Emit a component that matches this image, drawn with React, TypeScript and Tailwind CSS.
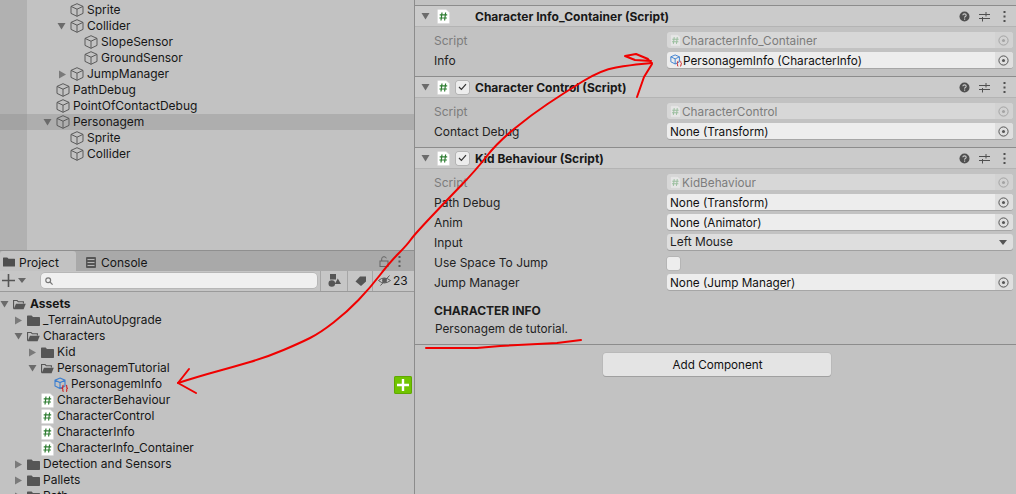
import React from "react";

const Cube = () => (
  <svg width="14" height="14" viewBox="0 0 14 14" fill="none" stroke="#5a5a5a" strokeWidth="1" className="shrink-0">
    <path d="M7 .7 13 3.4V10.4L7 13.3 1 10.4V3.4ZM1 3.4 7 6.2 13 3.4M7 6.2V13.3" />
  </svg>
);

const ArrowDown = () => (
  <svg width="9" height="8" viewBox="0 0 9 8" className="shrink-0"><path d="M0.5 1H8.5L4.5 7.5Z" fill="#6b6b6b" /></svg>
);
const ArrowRight = () => (
  <svg width="9" height="9" viewBox="0 0 9 9" className="shrink-0"><path d="M1 .5V8.5L8 4.5Z" fill="#7a7a7a" /></svg>
);

const FolderClosed = () => (
  <svg width="13" height="11" viewBox="0 0 13 11" className="shrink-0"><path d="M0 1.2Q0 .5.7.5H4.6L6 2H12.3Q13 2 13 2.7V10.3Q13 11 12.3 11H.7Q0 11 0 10.3Z" fill="#565656" /></svg>
);
const FolderOpen = () => (
  <svg width="13" height="11" viewBox="0 0 14 11" className="shrink-0" fill="none">
    <path d="M.6 10V1.2H4.4L5.8 2.6H11.2V4.5" stroke="#565656" strokeWidth="1.2" />
    <path d="M.6 10.6 3.2 4.6H13.8L11.4 10.6Z" fill="#565656" />
  </svg>
);

const ScriptIcon = ({ dim = false }: { dim?: boolean }) => (
  <svg width={dim ? 11 : 13} height={dim ? 13 : 15} viewBox="0 0 13 15" className="shrink-0">
    <path d="M.5 1Q.5.5 1 .5H9L12.5 3.5V14Q12.5 14.5 12 14.5H1Q.5 14.5.5 14Z" fill={dim ? "#e6e6e6" : "#ffffff"} stroke={dim ? "#cfcfcf" : "#d8d8d8"} strokeWidth=".5" />
    <path d="M5 3.5 4 11.5M8.6 3.5 7.6 11.5M2.7 5.9H10.2M2.4 9H9.9" stroke={dim ? "#9cbfa0" : "#2e7d32"} strokeWidth="1.2" fill="none" />
  </svg>
);

const Target = ({ dim = false }: { dim?: boolean }) => (
  <svg width="11" height="11" viewBox="0 0 11 11" fill="none">
    <circle cx="5.5" cy="5.5" r="4.6" stroke={dim ? "#a3a3a3" : "#555555"} strokeWidth="1" />
    <circle cx="5.5" cy="5.5" r="1.5" fill={dim ? "#a3a3a3" : "#555555"} />
  </svg>
);

const SoIcon = ({ small = false }: { small?: boolean }) => (
  <svg width={small ? 12 : 14} height={small ? 13 : 15} viewBox="0 0 14 15" fill="none" className="shrink-0">
    <path d="M6 1 11 3.2V9L6 11.6 1 9V3.2ZM1 3.2 6 5.6 11 3.2M6 5.6V11.6" stroke="#3d7fd0" strokeWidth="1.1" />
    <path d="M9.6 8.2Q8.6 8.2 8.9 10 8.9 11 8 11.3 8.9 11.6 8.9 12.6 8.6 14.4 9.6 14.4M12 8.2Q13 8.2 12.7 10 12.7 11 13.6 11.3 12.7 11.6 12.7 12.6 13 14.4 12 14.4" stroke="#d02020" strokeWidth="1.1" />
  </svg>
);

const Row = ({ cls, children, label, bold = false, textCls = "" }: { cls: string; children?: React.ReactNode; label: string; bold?: boolean; textCls?: string }) => (
  <div className={`flex h-4 shrink-0 items-center ${cls}`}>
    {children}
    <span className={`ml-[3px] whitespace-nowrap ${bold ? "font-bold" : ""} ${textCls}`}>{label}</span>
  </div>
);

const Field = ({ children, dim = false }: { children: React.ReactNode; dim?: boolean }) => (
  <div className={`flex h-4 w-[346px] items-center overflow-hidden rounded-[3px] text-[11.75px] ${dim ? "bg-[#d7d7d7] text-[#7c7c7c]" : "bg-[#ededed] text-[#111111] shadow-[0_1px_0_#a6a6a6]"}`}>
    <div className="flex min-w-0 flex-1 items-center gap-[1px] pl-[3px]">{children}</div>
    <div className={`flex h-4 w-[18px] items-center justify-center pr-[1px] ${dim ? "bg-[#d2d2d2]" : "bg-[#dfdfdf]"}`}>
      <Target dim={dim} />
    </div>
  </div>
);

const FieldText = ({ children }: { children: React.ReactNode }) => <span className="truncate pt-[1px]">{children}</span>;

const PropRow = ({ label, dim = false, children }: { label: string; dim?: boolean; children: React.ReactNode }) => (
  <div className={`flex h-4 items-center justify-between pl-[19px] pr-[3px] ${dim ? "text-[#7c7c7c]" : "text-[#222222]"}`}>
    <span className="whitespace-nowrap pt-[2px]">{label}</span>
    {children}
  </div>
);

const HeaderIcons = () => (
  <div className="flex items-center gap-[9px] pr-[10px]">
    <svg width="11" height="11" viewBox="0 0 11 11">
      <circle cx="5.5" cy="5.5" r="5" fill="#4f4f4f" />
      <path d="M3.8 4.3Q3.9 2.9 5.5 2.9 7.2 2.9 7.2 4.2 7.2 5 6.3 5.5 5.6 5.9 5.6 6.7" stroke="#cbcbcb" strokeWidth="1.1" fill="none" />
      <rect x="5" y="7.5" width="1.2" height="1.2" fill="#cbcbcb" />
    </svg>
    <svg width="11" height="11" viewBox="0 0 11 11" stroke="#4f4f4f" fill="none">
      <path d="M0 3.5H11M0 7.5H11M7 1V5.5M3.5 6V10.5" />
    </svg>
    <svg width="3" height="11" viewBox="0 0 3 11" fill="#4f4f4f" className="ml-[4px]">
      <rect x="0.5" y="0" width="2" height="2" />
      <rect x="0.5" y="4.5" width="2" height="2" />
      <rect x="0.5" y="9" width="2" height="2" />
    </svg>
  </div>
);

const Check = () => (
  <div className="flex h-[13px] w-[13px] items-center justify-center rounded-[2px] bg-[#ededed] shadow-[0_0_0_.5px_#a0a0a0]">
    <svg width="9" height="8" viewBox="0 0 9 8" fill="none" stroke="#333333" strokeWidth="1.2"><path d="M1 4 3.4 6.4 8 1.2" /></svg>
  </div>
);

const CompHeader = ({ title, check = true }: { title: string; check?: boolean }) => (
  <div className="box-content flex h-5 items-center border-t border-[#8c8c8c] bg-[#cbcbcb] pl-[6px]">
    <ArrowDown />
    <div className="ml-[7px]"><ScriptIcon /></div>
    <div className="ml-[6px] w-[13px]">{check && <Check />}</div>
    <span className="ml-[6px] flex-1 whitespace-nowrap pt-[2px] font-bold text-[#181818]">{title}</span>
    <HeaderIcons />
  </div>
);

const Hierarchy = () => (
  <div className="flex h-[250px] shrink-0">
    <div className="flex w-[27px] shrink-0 flex-col bg-[#b1b1b1] pt-[114px]">
      <div className="h-4 bg-[#a3a3a3]" />
    </div>
    <div className="flex flex-1 flex-col pt-[2px]">
      <Row cls="pl-[43px]" label="Sprite"><Cube /></Row>
      <Row cls="pl-[30px]" label="Collider"><ArrowDown /><span className="w-1" /><Cube /></Row>
      <Row cls="pl-[57px]" label="SlopeSensor"><Cube /></Row>
      <Row cls="pl-[57px]" label="GroundSensor"><Cube /></Row>
      <Row cls="pl-[31px]" label="JumpManager"><ArrowRight /><span className="w-[3px]" /><Cube /></Row>
      <Row cls="pl-[29px]" label="PathDebug"><Cube /></Row>
      <Row cls="pl-[29px]" label="PointOfContactDebug"><Cube /></Row>
      <Row cls="bg-[#aeaeae] pl-[16px]" label="Personagem"><ArrowDown /><span className="w-1" /><Cube /></Row>
      <Row cls="pl-[43px]" label="Sprite"><Cube /></Row>
      <Row cls="pl-[43px]" label="Collider"><Cube /></Row>
    </div>
  </div>
);

const ProjectTabs = () => (
  <div className="flex h-[21px] shrink-0 items-end border-t border-[#8f8f8f] bg-[#a9a9a9]">
    <div className="flex h-5 w-[76px] items-center gap-[4px] rounded-t-[3px] bg-[#c2c2c2] pl-[3px] pt-[2px]">
      <svg width="12" height="10" viewBox="0 0 13 10"><path d="M0 .6Q0 0 .6 0H4.6L6 1.4H12.4Q13 1.4 13 2V9.4Q13 10 12.4 10H.6Q0 10 0 9.4Z" fill="#4e4e4e" /></svg>
      <span className="pt-[2px]">Project</span>
    </div>
    <div className="flex h-5 flex-1 items-center pl-[10px] pt-[2px]">
      <svg width="10" height="11" viewBox="0 0 10 11" className="mr-[5px]">
        <rect width="10" height="11" rx="1" fill="#555555" />
        <path d="M1.5 2.5H8.5M1.5 5.5H8.5M1.5 8.5H8.5" stroke="#b5b5b5" strokeWidth="1" />
      </svg>
      <span className="pt-[2px]">Console</span>
      <svg width="10" height="11" viewBox="0 0 10 11" fill="none" stroke="#656565" className="mb-[2px] ml-[232px]">
        <rect x="1" y="5" width="8" height="5.5" />
        <path d="M2.7 5V2.8Q2.7.7 5 .7 7 .7 7.3 2.3" />
      </svg>
      <svg width="3" height="11" viewBox="0 0 3 11" fill="#5a5a5a" className="mb-[2px] ml-[9px]">
        <rect x="0.5" y="0" width="2" height="2" />
        <rect x="0.5" y="4.5" width="2" height="2" />
        <rect x="0.5" y="9" width="2" height="2" />
      </svg>
    </div>
  </div>
);

const ProjectToolbar = () => (
  <div className="flex h-[21px] shrink-0 items-center border-b border-[#9a9a9a] bg-[#c6c6c6] pb-[1px]">
    <svg width="13" height="13" viewBox="0 0 13 13" className="ml-[2px]" stroke="#555555" strokeWidth="1.6">
      <path d="M6.5 0V13M0 6.5H13" />
    </svg>
    <svg width="8" height="5" viewBox="0 0 8 5" className="ml-[3px]"><path d="M0 0H8L4 5Z" fill="#666666" /></svg>
    <div className="ml-[15px] flex h-[15px] w-[276px] items-center rounded-[4px] bg-[#f0f0f0] pl-[4px] shadow-[0_0_0_.5px_#a8a8a8]">
      <svg width="8" height="8" viewBox="0 0 8 8" fill="none" stroke="#777777" strokeWidth="1.2">
        <circle cx="3.2" cy="3.2" r="2.4" />
        <path d="M5 5 7.6 7.6" />
      </svg>
    </div>
    <div className="ml-[3px] flex h-5 w-[27px] items-center justify-center border-l border-[#a6a6a6]">
      <svg width="13" height="13" viewBox="0 0 13 13" fill="#555555">
        <rect x="2" y="0" width="6" height="5.5" />
        <circle cx="3.8" cy="9.5" r="3.3" />
        <path d="M9.8 4.5 13 10H6.8Z" />
      </svg>
    </div>
    <div className="flex h-5 w-[25px] items-center justify-center border-l border-[#a6a6a6]">
      <svg width="11" height="10" viewBox="0 0 11 10" fill="#555555"><path d="M5 .5H11V5.5L6 10 .5 5.5Z" /></svg>
    </div>
    <div className="flex h-5 flex-1 items-center gap-[2px] border-l border-[#a6a6a6] pl-[5px]">
      <svg width="13" height="11" viewBox="0 0 13 11" fill="none" stroke="#5a5a5a" strokeWidth="1">
        <path d="M.5 5.5Q6 .5 12.5 5.5 6 10.5.5 5.5Z" />
        <circle cx="6.5" cy="5.5" r="2" fill="#5a5a5a" />
        <path d="M2.5 10.5 11.5.5" />
      </svg>
      <span className="pt-[1px]">23</span>
    </div>
  </div>
);

const ProjectTree = () => (
  <div className="relative flex flex-1 flex-col overflow-hidden pt-[4px]">
    <Row cls="pl-0" label="Assets" bold><ArrowDown /><span className="w-1" /><FolderOpen /><span className="w-[1px]" /></Row>
    <Row cls="pl-[14px]" label="_TerrainAutoUpgrade" textCls="text-[11.85px]"><ArrowRight /><span className="w-1" /><FolderClosed /></Row>
    <Row cls="pl-[14px]" label="Characters"><ArrowDown /><span className="w-1" /><FolderOpen /></Row>
    <Row cls="pl-[28px]" label="Kid"><ArrowRight /><span className="w-1" /><FolderClosed /></Row>
    <Row cls="pl-[28px]" label="PersonagemTutorial"><ArrowDown /><span className="w-1" /><FolderOpen /></Row>
    <Row cls="pl-[54px]" label="PersonagemInfo" textCls="text-[11.75px]"><SoIcon /></Row>
    <Row cls="pl-[41px]" label="CharacterBehaviour"><ScriptIcon /></Row>
    <Row cls="pl-[41px]" label="CharacterControl"><ScriptIcon /></Row>
    <Row cls="pl-[41px]" label="CharacterInfo"><ScriptIcon /></Row>
    <Row cls="pl-[41px]" label="CharacterInfo_Container" textCls="text-[11.9px]"><ScriptIcon /></Row>
    <Row cls="pl-[14px]" label="Detection and Sensors"><ArrowRight /><span className="w-1" /><FolderClosed /></Row>
    <Row cls="pl-[14px]" label="Pallets"><ArrowRight /><span className="w-1" /><FolderClosed /></Row>
    <Row cls="pl-[14px]" label="Path"><ArrowRight /><span className="w-1" /><FolderClosed /></Row>
    <div className="absolute left-[394px] top-[84px] flex h-[18px] w-[18px] items-center justify-center rounded-[2px] bg-[#70c400] shadow-[inset_0_0_0_1px_#5fa800]">
      <svg width="12" height="12" viewBox="0 0 12 12" stroke="#ffffff" strokeWidth="2.4"><path d="M6 0V12M0 6H12" /></svg>
    </div>
  </div>
);

const Inspector = () => (
  <div className="flex min-w-0 flex-1 flex-col border-l border-[#8c8c8c] pt-[5px]">
    <CompHeader title="Character Info_Container (Script)" check={false} />
    <div className="flex h-[50px] flex-col gap-1 border-t border-[#b4b4b4] pt-[5px]">
      <PropRow label="Script" dim><Field dim><ScriptIcon dim /><FieldText>CharacterInfo_Container</FieldText></Field></PropRow>
      <PropRow label="Info"><Field><SoIcon small /><FieldText>PersonagemInfo (CharacterInfo)</FieldText></Field></PropRow>
    </div>
    <CompHeader title="Character Control (Script)" />
    <div className="flex h-[50px] flex-col gap-1 border-t border-[#b4b4b4] pt-[5px]">
      <PropRow label="Script" dim><Field dim><ScriptIcon dim /><FieldText>CharacterControl</FieldText></Field></PropRow>
      <PropRow label="Contact Debug"><Field><FieldText>None (Transform)</FieldText></Field></PropRow>
    </div>
    <CompHeader title="Kid Behaviour (Script)" />
    <div className="flex flex-col gap-1 border-t border-[#b4b4b4] pt-[5px]">
      <PropRow label="Script" dim><Field dim><ScriptIcon dim /><FieldText>KidBehaviour</FieldText></Field></PropRow>
      <PropRow label="Path Debug"><Field><FieldText>None (Transform)</FieldText></Field></PropRow>
      <PropRow label="Anim"><Field><FieldText>None (Animator)</FieldText></Field></PropRow>
      <PropRow label="Input">
        <div className="flex h-4 w-[346px] items-center justify-between rounded-[3px] bg-[#dedede] pl-[3px] pr-[6px] shadow-[0_1px_0_#a0a0a0]">
          <span className="text-[11.9px]">Left Mouse</span>
          <svg width="8" height="5" viewBox="0 0 8 5"><path d="M0 0H8L4 5Z" fill="#555555" /></svg>
        </div>
      </PropRow>
      <PropRow label="Use Space To Jump">
        <div className="w-[346px] pt-[2px]"><div className="h-[13px] w-[13px] rounded-[2px] bg-[#ededed] shadow-[0_0_0_.5px_#a8a8a8]" /></div>
      </PropRow>
      <PropRow label="Jump Manager"><Field><FieldText>None (Jump Manager)</FieldText></Field></PropRow>
    </div>
    <div className="pl-[19px] pt-[13px] font-bold text-[#1c1c1c]">CHARACTER INFO</div>
    <div className="pl-[20px] pt-[2px] text-[11.8px] text-[#222222]">Personagem de tutorial.</div>
    <div className="mt-[7px] flex flex-col items-center border-t border-[#8c8c8c] pl-[3px] pt-[8px]">
      <div className="flex h-[23px] w-[228px] items-center justify-center rounded-[3px] bg-[#e4e4e4] pl-[1px] text-[11.7px] text-[#111111] shadow-[0_1px_0_#a0a0a0,0_0_0_.5px_#b0b0b0]">Add Component</div>
    </div>
  </div>
);

const smooth = (pts: number[][]) => {
  let d = `M${pts[0][0]} ${pts[0][1]}`;
  for (let i = 1; i < pts.length - 1; i++) {
    const mx = (pts[i][0] + pts[i + 1][0]) / 2;
    const my = (pts[i][1] + pts[i + 1][1]) / 2;
    d += `Q${pts[i][0]} ${pts[i][1]} ${mx} ${my}`;
  }
  const last = pts[pts.length - 1];
  return `${d}L${last[0]} ${last[1]}`;
};

const curve = [[178, 383], [200, 376], [233, 367], [267, 357], [300, 343], [320, 333], [347, 312], [370, 288], [390, 262], [407, 245], [414, 235], [447, 200], [476, 170], [497, 143], [531, 115], [564, 93], [601, 70], [631, 65], [652, 63]];

export default function App() {
  return (
    <div className="relative flex h-[494px] w-[1016px] overflow-hidden bg-[#c2c2c2] text-[12px] leading-4 text-[#161616] [font-family:Inter,'Liberation_Sans',sans-serif]">
      <div className="flex w-[414px] shrink-0 flex-col">
        <Hierarchy />
        <ProjectTabs />
        <ProjectToolbar />
        <ProjectTree />
      </div>
      <Inspector />
      <svg width="1016" height="494" viewBox="0 0 1016 494" fill="none" stroke="#f00000" strokeWidth="2" strokeLinecap="round" strokeLinejoin="round" className="pointer-events-none absolute left-0 top-0">
        <path d="M196 393 178 383 189 369" />
        <path d={smooth(curve)} />
        <path d="M637 97 644 77 652 64 648 59 636 54 625 56 635 60 651 61" />
        <path d="M426 348 477 348 500 346 557 343 581 340" />
      </svg>
    </div>
  );
}
